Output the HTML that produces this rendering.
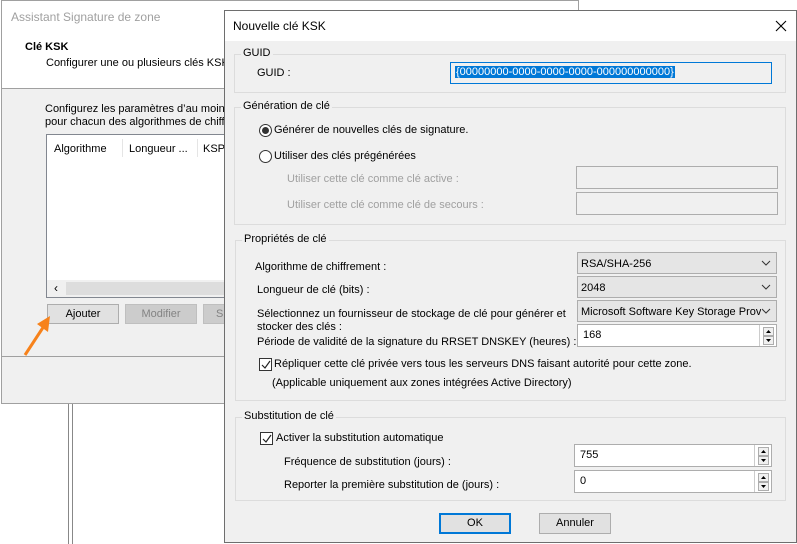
<!DOCTYPE html>
<html><head><meta charset="utf-8"><style>
*{box-sizing:border-box;margin:0;padding:0}
body{width:797px;height:544px;background:#fff;position:relative;overflow:hidden;font-family:"Liberation Sans",sans-serif;font-size:11px;color:#000}
.a{position:absolute;white-space:nowrap}
.g{color:#a0a0a0}
.grp{position:absolute;border:1px solid #dcdcdc}
.lbl{position:absolute;background:#f0f0f0;padding:0 2px;top:-8px;left:6px}
.box{position:absolute;border:1px solid #7a7a7a;background:#fff}
.combo{position:absolute;border:1px solid #adadad;background:#e5e5e5;padding:5px 0 0 3px}
.chev{position:absolute;right:5px;top:7px}
.spin{position:absolute;right:0;top:0;bottom:0;width:17px;border-left:1px solid #ccc;background:#fff}
.spin i{position:absolute;left:3px;width:11px;height:9px;border:1px solid #adadad;background:#f0f0f0}
.btn{position:absolute;border:1px solid #adadad;background:#e1e1e1;text-align:center;line-height:18px}
.cb{position:absolute;width:13px;height:13px;border:1px solid #333;background:#fff}
.rb{position:absolute;width:13px;height:13px;border:1px solid #333;border-radius:50%;background:#fff}
</style></head><body>
<div class="a" style="left:68px;top:403px;width:1px;height:141px;background:#888"></div>
<div class="a" style="left:72px;top:403px;width:1px;height:141px;background:#888"></div>
<div class="a" style="left:1px;top:0;width:578px;height:404px;border:1px solid #a0a0a0;background:#f0f0f0">
  <div class="a" style="left:0;top:0;width:576px;height:88px;background:#fff;border-bottom:1px solid #a0a0a0"></div>
  <div class="a g" style="left:9px;top:9px;font-size:12px">Assistant Signature de zone</div>
  <div class="a" style="left:23px;top:40px;font-weight:bold">Clé KSK</div>
  <div class="a" style="left:44px;top:56px">Configurer une ou plusieurs clés KSK</div>
  <div class="a" style="left:43px;top:102px">Configurez les paramètres d’au moins</div>
  <div class="a" style="left:43px;top:115px">pour chacun des algorithmes de chiffrement</div>
  <div class="a" style="left:44px;top:133px;width:200px;height:164px;border:1px solid #828790;background:#fff">
    <div class="a" style="left:7px;top:8px">Algorithme</div>
    <div class="a" style="left:75px;top:4px;width:1px;height:18px;background:#e5e5e5"></div>
    <div class="a" style="left:82px;top:8px">Longueur ...</div>
    <div class="a" style="left:150px;top:4px;width:1px;height:18px;background:#e5e5e5"></div>
    <div class="a" style="left:156px;top:8px">KSP</div>
    <div class="a" style="left:0;top:145px;width:200px;height:17px;background:#f0f0f0"></div>
    <div class="a" style="left:19px;top:147px;width:190px;height:13px;background:#ddd"></div>
    <div class="a" style="left:7px;top:146px;font-size:12px">‹</div>
  </div>
  <div class="btn" style="left:45px;top:303px;width:72px;height:20px">Ajouter</div>
  <div class="btn g" style="left:123px;top:303px;width:72px;height:20px;border-color:#bfbfbf;background:#ccc;color:#838383">Modifier</div>
  <div class="btn g" style="left:201px;top:303px;width:72px;height:20px;border-color:#bfbfbf;background:#ccc;color:#838383;text-align:left;padding-left:12px">Su</div>
  <div class="a" style="left:0;top:355px;width:576px;height:1px;background:#a0a0a0"></div>
</div>
<svg class="a" style="left:20px;top:310px" width="40" height="50"><line x1="5" y1="45" x2="24" y2="16" stroke="#f7821b" stroke-width="3"/><polygon points="30,6 17,14 28,22" fill="#f7821b"/></svg>

<div class="a" style="left:224px;top:10px;width:573px;height:533px;border:1px solid #6e6e6e;background:#f0f0f0">
  <div class="a" style="left:0;top:0;width:571px;height:30px;background:#fff"></div>
  <div class="a" style="left:8px;top:8px;font-size:12px">Nouvelle clé KSK</div>
  <svg class="a" style="left:550px;top:9px" width="12" height="12"><path d="M1 1L11 11M11 1L1 11" stroke="#000" stroke-width="1.1"/></svg>

  <div class="grp" style="left:9px;top:43px;width:552px;height:39px"><span class="lbl">GUID</span></div>
  <div class="a" style="left:32px;top:56px">GUID :</div>
  <div class="a" style="left:225px;top:51px;width:322px;height:22px;border:1px solid #0078d7;background:#f0f0f0"><span class="a" style="left:4px;top:3px;background:#0078d7;color:#fff;padding:0 1px">{00000000-0000-0000-0000-000000000000}</span></div>

  <div class="grp" style="left:9px;top:96px;width:552px;height:118px"><span class="lbl">Génération de clé</span></div>
  <div class="rb" style="left:34px;top:113px"><div class="a" style="left:2px;top:2px;width:7px;height:7px;border-radius:50%;background:#333"></div></div>
  <div class="a" style="left:49px;top:113px">Générer de nouvelles clés de signature.</div>
  <div class="rb" style="left:34px;top:139px"></div>
  <div class="a" style="left:49px;top:139px">Utiliser des clés prégénérées</div>
  <div class="a g" style="left:62px;top:162px">Utiliser cette clé comme clé active :</div>
  <div class="a g" style="left:62px;top:188px">Utiliser cette clé comme clé de secours :</div>
  <div class="a" style="left:351px;top:155px;width:202px;height:23px;border:1px solid #adadad"></div>
  <div class="a" style="left:351px;top:181px;width:202px;height:23px;border:1px solid #adadad"></div>

  <div class="grp" style="left:10px;top:229px;width:551px;height:161px"><span class="lbl">Propriétés de clé</span></div>
  <div class="a" style="left:30px;top:250px">Algorithme de chiffrement :</div>
  <div class="combo" style="left:352px;top:241px;width:200px;height:22px">RSA/SHA-256<svg class="chev" width="10" height="6"><path d="M1 1L5 5L9 1" fill="none" stroke="#333"/></svg></div>
  <div class="a" style="left:32px;top:273px">Longueur de clé (bits) :</div>
  <div class="combo" style="left:352px;top:265px;width:200px;height:22px">2048<svg class="chev" width="10" height="6"><path d="M1 1L5 5L9 1" fill="none" stroke="#333"/></svg></div>
  <div class="a" style="left:32px;top:297px">Sélectionnez un fournisseur de stockage de clé pour générer et</div>
  <div class="a" style="left:32px;top:310px">stocker des clés :</div>
  <div class="combo" style="left:352px;top:289px;width:200px;height:22px;overflow:hidden"><span style="display:block;width:180px;overflow:hidden">Microsoft Software Key Storage Provider</span><svg class="chev" width="10" height="6"><path d="M1 1L5 5L9 1" fill="none" stroke="#333"/></svg></div>
  <div class="a" style="left:32px;top:325px">Période de validité de la signature du RRSET DNSKEY (heures) :</div>
  <div class="box" style="left:352px;top:313px;width:200px;height:23px;border-color:#adadad"><span class="a" style="left:5px;top:4px">168</span><div class="spin"><i style="top:2px"><svg class="a" style="left:2px;top:2px" width="5" height="3"><path d="M0 3L2.5 0L5 3Z"/></svg></i><i style="top:11px"><svg class="a" style="left:2px;top:2px" width="5" height="3"><path d="M0 0L2.5 3L5 0Z"/></svg></i></div></div>
  <div class="cb" style="left:34px;top:347px"><svg class="a" style="left:1px;top:1px" width="10" height="10"><path d="M1 5L4 8L9 1" fill="none" stroke="#222" stroke-width="1.2"/></svg></div>
  <div class="a" style="left:49px;top:347px">Répliquer cette clé privée vers tous les serveurs DNS faisant autorité pour cette zone.</div>
  <div class="a" style="left:47px;top:366px">(Applicable uniquement aux zones intégrées Active Directory)</div>

  <div class="grp" style="left:10px;top:406px;width:551px;height:84px"><span class="lbl">Substitution de clé</span></div>
  <div class="cb" style="left:35px;top:421px"><svg class="a" style="left:1px;top:1px" width="10" height="10"><path d="M1 5L4 8L9 1" fill="none" stroke="#222" stroke-width="1.2"/></svg></div>
  <div class="a" style="left:51px;top:421px">Activer la substitution automatique</div>
  <div class="a" style="left:59px;top:445px">Fréquence de substitution (jours) :</div>
  <div class="box" style="left:349px;top:433px;width:198px;height:23px;border-color:#adadad"><span class="a" style="left:5px;top:4px">755</span><div class="spin"><i style="top:2px"><svg class="a" style="left:2px;top:2px" width="5" height="3"><path d="M0 3L2.5 0L5 3Z"/></svg></i><i style="top:11px"><svg class="a" style="left:2px;top:2px" width="5" height="3"><path d="M0 0L2.5 3L5 0Z"/></svg></i></div></div>
  <div class="a" style="left:59px;top:468px">Reporter la première substitution de (jours) :</div>
  <div class="box" style="left:349px;top:459px;width:198px;height:23px;border-color:#adadad"><span class="a" style="left:5px;top:4px">0</span><div class="spin"><i style="top:2px"><svg class="a" style="left:2px;top:2px" width="5" height="3"><path d="M0 3L2.5 0L5 3Z"/></svg></i><i style="top:11px"><svg class="a" style="left:2px;top:2px" width="5" height="3"><path d="M0 0L2.5 3L5 0Z"/></svg></i></div></div>

  <div class="btn" style="left:214px;top:502px;width:72px;height:21px;border:2px solid #0078d7;line-height:17px">OK</div>
  <div class="btn" style="left:314px;top:502px;width:72px;height:21px">Annuler</div>
</div>
</body></html>
